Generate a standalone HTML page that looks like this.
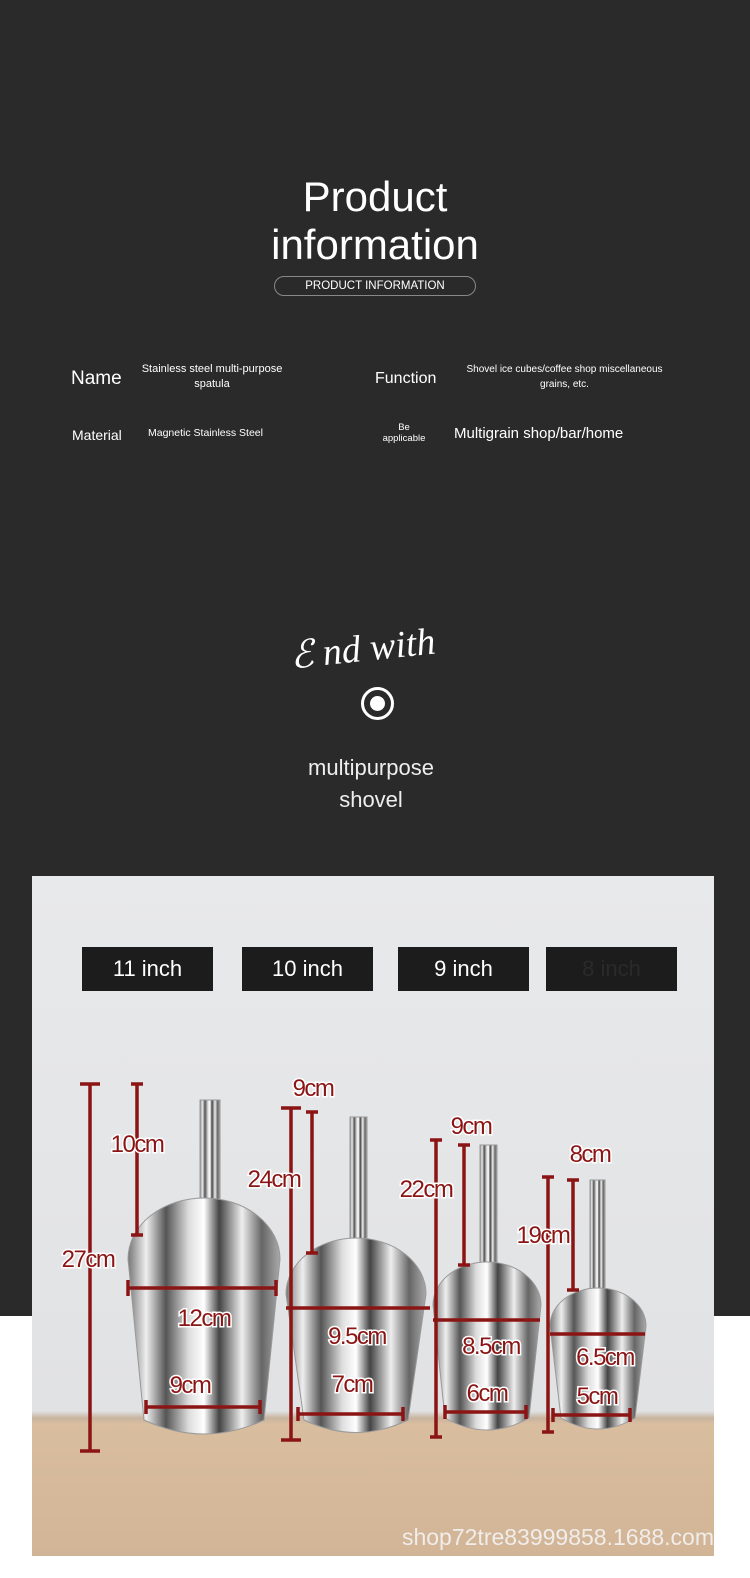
<!DOCTYPE html>
<html><head><meta charset="utf-8"><style>
*{margin:0;padding:0;box-sizing:border-box}
body{width:750px;height:1578px;position:relative;background:#fff;font-family:"Liberation Sans",sans-serif;overflow:hidden}
.dark{position:absolute;left:0;top:0;width:750px;height:1316px;background:#2a2a2a}
.t{position:absolute;color:#fff;text-align:center;white-space:nowrap}
.photo{position:absolute;left:32px;top:876px;width:682px;height:680px;background:linear-gradient(#e8e9eb,#e1e2e4 535px,#c8b49f 542px,#d9bd9f 548px,#d2b596 680px);overflow:hidden}
.box{position:absolute;top:947px;width:131px;height:44px;background:#1c1c1c;color:#fff;font-size:22px;text-align:center;line-height:44px}
</style></head><body>
<div class="dark"></div>
<div class="t" style="left:0;width:750px;top:173px;font-size:42px;line-height:48px">Product<br>information</div>
<div class="t" style="left:274px;top:276px;width:202px;height:20px;border:1px solid #888;border-radius:10px;font-size:11.5px;line-height:19px">PRODUCT INFORMATION</div>
<div class="t" style="left:71px;top:368px;font-size:19px">Name</div>
<div class="t" style="left:132px;top:362px;width:160px;font-size:11px;line-height:15px;white-space:normal">Stainless steel multi-purpose spatula</div>
<div class="t" style="left:375px;top:370px;font-size:16px">Function</div>
<div class="t" style="left:452px;top:362px;width:225px;font-size:10px;line-height:15px;white-space:normal">Shovel ice cubes/coffee shop miscellaneous grains, etc.</div>
<div class="t" style="left:72px;top:427px;font-size:14px">Material</div>
<div class="t" style="left:148px;top:427px;font-size:10.5px">Magnetic Stainless Steel</div>
<div class="t" style="left:378px;top:422px;width:52px;font-size:9.5px;line-height:11px">Be<br>applicable</div>
<div class="t" style="left:454px;top:425px;font-size:15px">Multigrain shop/bar/home</div>
<div class="t" style="left:290px;top:626px;font-family:'Liberation Serif',serif;font-style:italic;font-size:38px;transform:rotate(-6deg)">ℰ nd with</div>
<div style="position:absolute;left:361px;top:687px;width:33px;height:33px;border:3px solid #fff;border-radius:50%"></div>
<div style="position:absolute;left:370px;top:696px;width:15px;height:15px;background:#fff;border-radius:50%"></div>
<div class="t" style="left:0;width:742px;top:752px;font-size:22px;line-height:32px;color:#eee">multipurpose<br>shovel</div>
<div class="photo"></div>
<div class="box" style="left:82px">11 inch</div>
<div class="box" style="left:242px">10 inch</div>
<div class="box" style="left:398px">9 inch</div>
<div class="box" style="left:546px;color:#2a2a2a">8 inch</div>
<svg style="position:absolute;left:0;top:0" width="750" height="1578">
<defs><linearGradient id="m" x1="0" x2="1" y1="0" y2="0">
<stop offset="0" stop-color="#777"/><stop offset=".12" stop-color="#eee"/><stop offset=".25" stop-color="#555"/><stop offset=".4" stop-color="#ddd"/><stop offset=".5" stop-color="#fff"/><stop offset=".6" stop-color="#444"/><stop offset=".75" stop-color="#eee"/><stop offset=".88" stop-color="#666"/><stop offset="1" stop-color="#aaa"/></linearGradient></defs>
<g fill="url(#m)" stroke="#999" stroke-width="1">
<rect x="200" y="1100" width="20" height="110"/>
<path d="M128 1259 A76 61 0 0 1 280 1259 L264 1420 Q204 1448 144 1420 Z"/>
<rect x="350" y="1117" width="17" height="125"/>
<path d="M286 1294 A70 56 0 0 1 426 1294 L408 1420 Q356 1445 304 1420 Z"/>
<rect x="480" y="1145" width="17" height="120"/>
<path d="M433 1305 A54 43 0 0 1 541 1305 L529 1418 Q487 1442 445 1418 Z"/>
<rect x="590" y="1180" width="15" height="110"/>
<path d="M550 1326 A48 38 0 0 1 646 1326 L635 1418 Q598 1440 561 1418 Z"/>
</g>
<g stroke="#8b1414" stroke-width="3.5" fill="none">
<path d="M90 1084V1451M80 1084H100M80 1451H100"/>
<path d="M137 1084V1235M131 1084H143M131 1235H143"/>
<path d="M128 1288H276M128 1280V1296M276 1280V1296"/>
<path d="M146 1407H260M146 1400V1414M260 1400V1414"/>
<path d="M291 1108V1440M281 1108H301M281 1440H301"/>
<path d="M312 1112V1253M306 1112H318M306 1253H318"/>
<path d="M286 1308H430"/>
<path d="M298 1414H403M298 1407V1421M403 1407V1421"/>
<path d="M436 1140V1437M430 1140H442M430 1437H442"/>
<path d="M464 1145V1265M458 1145H470M458 1265H470"/>
<path d="M433 1320H540"/>
<path d="M445 1412H526M445 1405V1419M526 1405V1419"/>
<path d="M548 1177V1432M542 1177H554M542 1432H554"/>
<path d="M573 1180V1290M567 1180H579M567 1290H579"/>
<path d="M550 1334H645"/>
<path d="M553 1415H630M553 1408V1422M630 1408V1422"/>
</g>
<g font-family="Liberation Sans,sans-serif" font-size="24" fill="#8b1414" stroke="#fff" stroke-width="3" paint-order="stroke" text-anchor="middle" letter-spacing="-1.5">
<text x="88" y="1267">27cm</text><text x="137" y="1152">10cm</text><text x="204" y="1326">12cm</text><text x="190" y="1393">9cm</text>
<text x="274" y="1187">24cm</text><text x="313" y="1096">9cm</text><text x="357" y="1344">9.5cm</text><text x="352" y="1392">7cm</text>
<text x="426" y="1197">22cm</text><text x="471" y="1134">9cm</text><text x="491" y="1354">8.5cm</text><text x="487" y="1401">6cm</text>
<text x="543" y="1243">19cm</text><text x="590" y="1162">8cm</text><text x="605" y="1365">6.5cm</text><text x="597" y="1404">5cm</text>
</g>
<text x="714" y="1545" text-anchor="end" font-family="Liberation Sans,sans-serif" font-size="23" fill="#f3f3f3" fill-opacity=".9">shop72tre83999858.1688.com</text>
</svg>
</body></html>
